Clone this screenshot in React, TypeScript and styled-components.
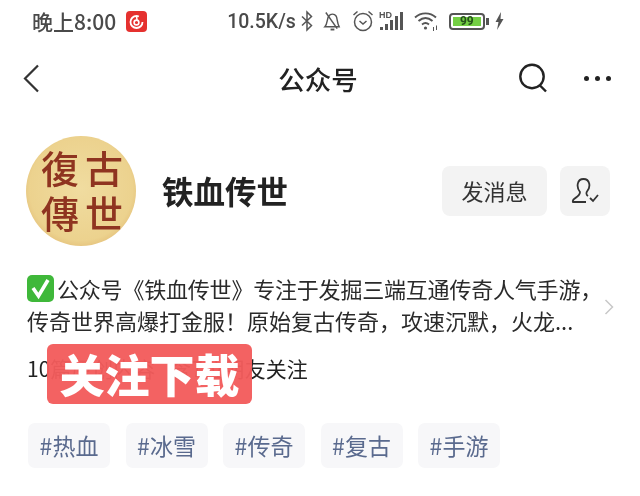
import React from "react";
import styled, { createGlobalStyle } from "styled-components";

const GlobalStyle = createGlobalStyle`
  html, body {
    margin: 0;
    padding: 0;
    background: #fff;
  }
  * {
    box-sizing: border-box;
  }
`;

const tags = ["热血", "冰雪", "传奇", "复古", "手游"];

const App: React.FC = () => {
  return (
    <>
      <GlobalStyle />
      <Page>
        <StatusBar>
          <Clock>晚上8:00</Clock>
          <MusicBadge>
            <svg width="21" height="21" viewBox="0 0 21 21">
              <rect width="21" height="21" rx="4" fill="#e5312f" />
              <circle cx="10.5" cy="11" r="6" fill="none" stroke="#fff" strokeWidth="1.8" strokeDasharray="30 8" />
              <circle cx="10.5" cy="11.5" r="2.4" fill="none" stroke="#fff" strokeWidth="1.6" />
              <path d="M11 9 L10.5 5" stroke="#fff" strokeWidth="1.5" />
            </svg>
          </MusicBadge>
          <Speed>10.5K/s</Speed>
          <StatusIcons>
            <StatusIcon $left={5} width="12" height="22" viewBox="0 0 12 22" fill="none" stroke="#555" strokeWidth="1.5">
              <path d="M1 6.5 L10.5 15.5 L6 20 V2 L10.5 6.5 L1 15.5" />
            </StatusIcon>
            <StatusIcon $left={10} width="18" height="22" viewBox="0 0 19 22" fill="none" stroke="#555" strokeWidth="1.5">
              <path d="M2 17 C5 14 4 9 6 6 C8 3 12 3 14 6 C15 8 15 13 17 17 Z" />
              <path d="M3 2 L15 19" />
              <path d="M8 20 H12" strokeWidth="2" />
            </StatusIcon>
            <StatusIcon $left={11} width="22" height="24" viewBox="0 0 22 24" fill="none" stroke="#555" strokeWidth="1.5">
              <circle cx="11" cy="13" r="8.5" />
              <path d="M7.5 12 L11 15 L14.5 12" />
              <path d="M1.5 6 L5.5 2.5 M20.5 6 L16.5 2.5" />
            </StatusIcon>
            <StatusIcon $left={5} width="26" height="22" viewBox="0 0 26 22">
              <text x="0" y="8" fontSize="9" fontWeight="700" fontFamily="Liberation Sans, sans-serif" fill="#555">HD</text>
              <rect x="1" y="17" width="3" height="3" fill="#555" />
              <rect x="6" y="14" width="3" height="6" fill="#555" />
              <rect x="11" y="10" width="3" height="10" fill="#555" />
              <rect x="16" y="6" width="3" height="14" fill="#555" />
              <rect x="21" y="2" width="3" height="18" fill="#555" />
            </StatusIcon>
            <StatusIcon $left={9} width="25" height="22" viewBox="0 0 25 22" fill="none" stroke="#555" strokeWidth="1.9">
              <path d="M1 7.5 C7 2 16 2 22 7.5" />
              <path d="M4.5 11 C9 7 14 7 18.5 11" />
              <path d="M8 14.5 C10.5 12.5 12.5 12.5 15 14.5" />
              <circle cx="11.5" cy="18" r="1.6" fill="#555" stroke="none" />
              <path d="M19.5 17 V21 M22.5 15.5 V20" strokeWidth="1" />
            </StatusIcon>
            <Battery>
              <BatteryFill>99</BatteryFill>
            </Battery>
            <BatteryNib />
            <StatusIcon $left={6} width="9" height="18" viewBox="0 0 9 18">
              <path d="M6 0 L0.5 10 H3.5 L2 18 L8.5 7 H5.5 Z" fill="#555" />
            </StatusIcon>
          </StatusIcons>
        </StatusBar>

        <NavBar>
          <svg width="17" height="29" viewBox="0 0 17 29" fill="none" stroke="#333" strokeWidth="2.2">
            <path d="M15 1.5 L2 14.5 L15 27.5" />
          </svg>
          <NavTitle>公众号</NavTitle>
          <NavActions>
            <svg width="30" height="30" viewBox="0 0 30 30" fill="none" stroke="#222" strokeWidth="2.4">
              <circle cx="14" cy="13.5" r="11.7" />
              <path d="M22 22.5 L28 28.5" />
            </svg>
            <Dots>
              <Dot />
              <Dot />
              <Dot />
            </Dots>
          </NavActions>
        </NavBar>

        <Profile>
          <Avatar>
            <Seal>復</Seal>
            <Seal>古</Seal>
            <Seal>傳</Seal>
            <Seal>世</Seal>
          </Avatar>
          <Name>铁血传世</Name>
          <MessageButton>发消息</MessageButton>
          <IconButton>
            <svg width="28" height="26" viewBox="0 0 28 26" fill="none" stroke="#333" strokeWidth="1.8">
              <path d="M15 24 H2 C0 20 9 20 9 14 C5 9 6 1 12.5 1 C19 1 20 9 16 13.5 C15 15 15.5 17 17 18" />
              <path d="M19 20 L22 23 L27 17" />
            </svg>
          </IconButton>
        </Profile>

        <Description>
          <Line $tight>
            <CheckMark width="27" height="27" viewBox="0 0 27 27">
              <rect width="27" height="27" rx="5" fill="#3fb83a" />
              <path d="M6 13 L11.5 21 L21 5" fill="none" stroke="#fff" strokeWidth="3.6" />
            </CheckMark>
            公众号《铁血传世》专注于发掘三端互通传奇人气手游，
          </Line>
          <Line>传奇世界高爆打金服！原始复古传奇，攻速沉默，火龙...</Line>
          <MoreArrow width="10" height="16" viewBox="0 0 10 16" fill="none" stroke="#c8c8c8" strokeWidth="1.5">
            <path d="M1.5 1 L8.5 8 L1.5 15" />
          </MoreArrow>
        </Description>

        <Followers>
          10篇原创内容 含7位朋友关注
          <FollowBanner>关注下载</FollowBanner>
        </Followers>

        <TagRow>
          {tags.map((tag) => (
            <Tag key={tag}>#{tag}</Tag>
          ))}
        </TagRow>
      </Page>
    </>
  );
};

export default App;

const Page = styled.div`
  width: 640px;
  height: 496px;
  overflow: hidden;
  background: #fff;
  font-family: "Noto Sans CJK SC", "Noto Sans", sans-serif;
  filter: blur(0.35px);
`;

const StatusBar = styled.div`
  display: flex;
  align-items: center;
  height: 42px;
  padding-left: 32px;
  color: #4a4a4a;
`;

const Clock = styled.span`
  font-size: 21px;
  font-weight: 500;
  white-space: nowrap;
`;

const MusicBadge = styled.span`
  display: flex;
  margin-left: 10px;
`;

const Speed = styled.span`
  margin-left: 80px;
  font-size: 19.5px;
  font-weight: 500;
  font-family: "Roboto", sans-serif;
`;

const StatusIcons = styled.div`
  display: flex;
  align-items: center;
`;

const StatusIcon = styled.svg<{ $left: number }>`
  flex-shrink: 0;
  margin-left: ${(p) => p.$left}px;
`;

const Battery = styled.div`
  width: 36px;
  height: 17px;
  margin-left: 10px;
  padding: 2px;
  border: 2px solid #555;
  border-radius: 4px;
`;

const BatteryFill = styled.div`
  display: flex;
  justify-content: center;
  align-items: center;
  width: 28px;
  height: 9px;
  background: #74cf44;
  color: #24501a;
  font-family: "Roboto", sans-serif;
  font-size: 12px;
  font-weight: 700;
`;

const BatteryNib = styled.div`
  width: 3px;
  height: 7px;
  margin-left: 1px;
  background: #555;
`;

const NavBar = styled.div`
  display: flex;
  align-items: center;
  justify-content: space-between;
  position: relative;
  height: 72px;
  padding: 0 29px 0 23px;
`;

const NavTitle = styled.h1`
  position: absolute;
  left: 0;
  right: 4px;
  margin: 0;
  text-align: center;
  font-size: 26.5px;
  font-weight: 500;
  color: #222;
`;

const NavActions = styled.div`
  display: flex;
  align-items: center;
  gap: 36px;
`;

const Dots = styled.div`
  display: flex;
  gap: 6px;
`;

const Dot = styled.span`
  width: 5px;
  height: 5px;
  border-radius: 50%;
  background: #222;
`;

const Profile = styled.div`
  display: flex;
  align-items: center;
  padding: 22px 30px 0 26px;
`;

const Avatar = styled.div`
  display: grid;
  grid-template-columns: 1fr 1fr;
  align-items: center;
  justify-items: center;
  width: 110px;
  height: 110px;
  padding: 8px 10px 12px 12px;
  border-radius: 50%;
  background: radial-gradient(circle at 50% 48%, #f0dca0 0%, #ecd28e 65%, #d9a860 92%, #b98548 100%);
`;

const Seal = styled.span`
  font-family: "Noto Sans CJK TC", sans-serif;
  font-size: 38px;
  line-height: 44px;
  font-weight: 500;
  color: #8f3420;
`;

const Name = styled.h2`
  flex: 1;
  margin: 0 0 3px 26px;
  font-size: 31.5px;
  font-weight: 700;
  color: #222;
`;

const MessageButton = styled.button`
  width: 105px;
  height: 50px;
  padding: 0 0 3px;
  border: none;
  border-radius: 8px;
  background: #f3f3f3;
  color: #333;
  font-family: inherit;
  font-size: 22px;
`;

const IconButton = styled.button`
  display: flex;
  justify-content: center;
  align-items: center;
  width: 50px;
  height: 50px;
  margin-left: 13px;
  padding: 0;
  border: none;
  border-radius: 8px;
  background: #f3f3f3;
`;

const Description = styled.div`
  position: relative;
  margin-top: 26px;
  padding-left: 27px;
  color: #2a2a2a;
  font-size: 22px;
  line-height: 32px;
`;

const Line = styled.div<{ $tight?: boolean }>`
  display: flex;
  align-items: center;
  white-space: nowrap;
  letter-spacing: ${(p) => (p.$tight ? "-0.2px" : "0")};
`;

const CheckMark = styled.svg`
  flex-shrink: 0;
  margin-right: 3px;
`;

const MoreArrow = styled.svg`
  position: absolute;
  top: 27px;
  right: 26px;
`;

const Followers = styled.div`
  position: relative;
  margin-top: 16px;
  padding-left: 27px;
  color: #222;
  font-size: 21px;
  line-height: 32px;
  word-spacing: 10px;
`;

const FollowBanner = styled.div`
  position: absolute;
  top: -8px;
  left: 47px;
  display: flex;
  justify-content: center;
  align-items: center;
  width: 205px;
  height: 60px;
  padding-bottom: 2px;
  border-radius: 6px;
  background: rgba(242, 92, 92, 0.96);
  color: #fff;
  font-size: 45px;
  font-weight: 900;
  line-height: 1;
`;

const TagRow = styled.div`
  display: flex;
  gap: 15.5px;
  margin-top: 39px;
  padding-left: 28px;
`;

const Tag = styled.div`
  display: flex;
  justify-content: center;
  align-items: center;
  width: 82px;
  height: 45px;
  padding-bottom: 1px;
  border-radius: 7px;
  background: #f7f7f9;
  color: #5a6a8e;
  font-size: 23px;
  font-weight: 400;
`;
